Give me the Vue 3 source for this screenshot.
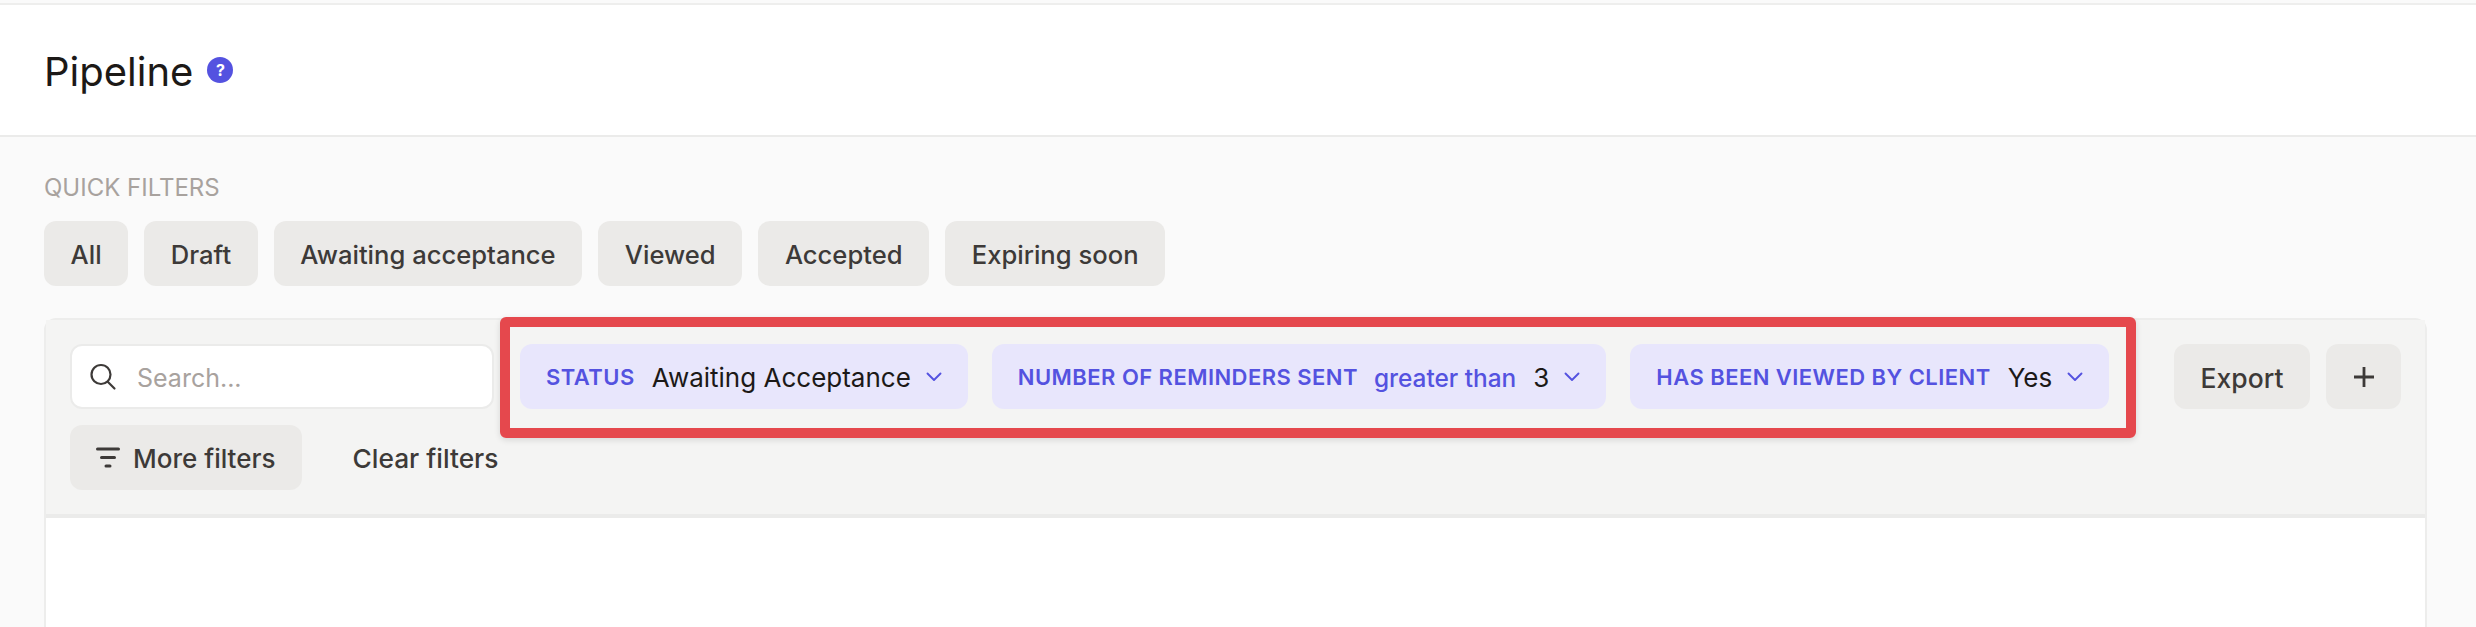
<template>
  <div class="page">
    <header class="page-header">
      <h1>Pipeline</h1>
      <span class="help">?</span>
    </header>

    <main class="content">
      <div class="quick-label">QUICK FILTERS</div>
      <div class="quick-filters">
        <button v-for="name in quickFilters" :key="name" class="btn">{{ name }}</button>
      </div>

      <section class="card">
        <div class="toolbar">
          <div class="filters">
            <label class="search">
              <svg width="30" height="30" viewBox="0 0 30 30" fill="none" stroke="#3d3a38" stroke-width="2.2" stroke-linecap="round">
                <circle cx="13" cy="12.5" r="9.5" />
                <path d="M20 20l6.5 6.5" />
              </svg>
              <input type="text" placeholder="Search..." />
            </label>

            <div class="chips">
              <div v-for="chip in chips" :key="chip.label" class="chip">
                <span class="chip-label">{{ chip.label }}</span>
                <span v-if="chip.operator" class="chip-operator">{{ chip.operator }}</span>
                <span class="chip-value">{{ chip.value }}</span>
                <svg width="16" height="10" viewBox="0 0 16 10" fill="none" stroke="#5452e0" stroke-width="1.9" stroke-linecap="round" stroke-linejoin="round">
                  <path d="M1.5 1.5L8 8l6.5-6.5" />
                </svg>
              </div>
            </div>

            <button class="btn btn-more">
              <svg width="24" height="22" viewBox="0 0 24 22" fill="none" stroke="#3d3a38" stroke-width="3" stroke-linecap="round">
                <path d="M1.5 2h21M5.5 10.5h13M10 19h4" />
              </svg>
              More filters
            </button>
            <button class="btn-clear">Clear filters</button>
          </div>

          <div class="actions">
            <button class="btn">Export</button>
            <button class="btn btn-add">
              <svg width="22" height="22" viewBox="0 0 22 22" fill="none" stroke="#3d3a38" stroke-width="2.8">
                <path d="M11 1v20M1 11h20" />
              </svg>
            </button>
          </div>
        </div>
        <div class="card-body"></div>
      </section>
    </main>
  </div>
</template>

<script setup>
const quickFilters = ['All', 'Draft', 'Awaiting acceptance', 'Viewed', 'Accepted', 'Expiring soon']

const chips = [
  { label: 'STATUS', value: 'Awaiting Acceptance' },
  { label: 'NUMBER OF REMINDERS SENT', operator: 'greater than', value: '3' },
  { label: 'HAS BEEN VIEWED BY CLIENT', value: 'Yes' }
]
</script>

<style>
html,
body {
  margin: 0;
  background: #fafafa;
  overflow: hidden;
}
</style>

<style scoped>
.page {
  font-family: Inter, "Liberation Sans", sans-serif;
  color: #3d3a38;
  height: 627px;
  overflow: hidden;
}

.page-header {
  display: flex;
  align-items: center;
  gap: 14px;
  box-sizing: border-box;
  height: 134px;
  margin-top: 3px;
  padding: 2px 0 0 44px;
  background: #fff;
  border-top: 2px solid #eeeeed;
  border-bottom: 2px solid #ebebea;
}

.page-header h1 {
  margin: 0;
  font-size: 40px;
  font-weight: 400;
  color: #1c1917;
}

.help {
  display: flex;
  align-items: center;
  justify-content: center;
  width: 26px;
  height: 26px;
  margin-bottom: 2px;
  border-radius: 50%;
  background: #5452e0;
  color: #fff;
  font-size: 16px;
  font-weight: 700;
}

.content {
  padding: 38px 49px 0 44px;
}

.quick-label {
  font-size: 24px;
  line-height: 26px;
  color: #a8a29e;
}

.quick-filters {
  display: flex;
  gap: 16px;
  margin-top: 20px;
}

.btn {
  display: flex;
  align-items: center;
  box-sizing: border-box;
  height: 65px;
  padding: 2px 26.6px 0;
  border: none;
  border-radius: 12px;
  background: #ebeae8;
  color: #3d3a38;
  font-family: inherit;
  font-size: 25.6px;
  font-weight: 500;
  white-space: nowrap;
}

.card {
  margin-top: 32px;
  background: #fff;
  border: 2px solid #ededec;
  border-radius: 12px 12px 0 0;
}

.toolbar {
  display: flex;
  justify-content: space-between;
  padding: 24px;
  background: #f4f4f3;
  border-bottom: 4px solid #ebebea;
}

.filters {
  display: flex;
  flex-wrap: wrap;
  align-items: center;
  gap: 16px 26px;
  flex: 1;
}

.search {
  display: flex;
  align-items: center;
  gap: 17px;
  box-sizing: border-box;
  width: 424px;
  height: 65px;
  padding: 0 16px;
  background: #fff;
  border: 2px solid #ebebea;
  border-radius: 12px;
}

.search input {
  flex: 1;
  min-width: 0;
  padding: 2px 0 0 2px;
  border: none;
  outline: none;
  background: none;
  font-family: inherit;
  font-size: 25px;
  color: #3d3a38;
}

.search input::placeholder {
  color: #a8a29e;
}

.chips {
  position: relative;
  display: flex;
  gap: 24px;
}

/* red annotation frame drawn over the toolbar */
.chips::after {
  content: "";
  position: absolute;
  inset: -27px -27px -29px -20px;
  border: 10px solid #e5484d;
  border-radius: 6px;
  box-shadow: 0 2px 6px rgba(0, 0, 0, 0.12);
  pointer-events: none;
}

.chip {
  display: flex;
  align-items: center;
  box-sizing: border-box;
  height: 65px;
  padding: 0 26px;
  border-radius: 12px;
  background: #e8e6fc;
  white-space: nowrap;
}

.chip svg {
  margin-left: 15px;
}

.chip-label {
  font-size: 22px;
  font-weight: 600;
  letter-spacing: 0.45px;
  color: #5452e0;
}

.chip-operator {
  margin-left: 16px;
  padding-top: 2px;
  font-size: 24.4px;
  font-weight: 500;
  color: #5452e0;
}

.chip-value {
  margin-left: 17px;
  padding-top: 2px;
  font-size: 26px;
  color: #1c1917;
}

.btn-more {
  gap: 13px;
  padding: 2px 26px 0;
  font-size: 26px;
}

.btn-more svg {
  margin-top: -2px;
}

.btn-clear {
  border: none;
  background: none;
  padding: 2px 0 0 25px;
  font-family: inherit;
  font-size: 26.3px;
  font-weight: 500;
  color: #3d3a38;
}

.actions {
  display: flex;
  gap: 16px;
  margin-left: 36px;
}

.actions .btn {
  font-size: 26.5px;
}

.actions .btn-add {
  width: 75px;
  padding: 0;
  justify-content: center;
}

.card-body {
  height: 200px;
}
</style>
